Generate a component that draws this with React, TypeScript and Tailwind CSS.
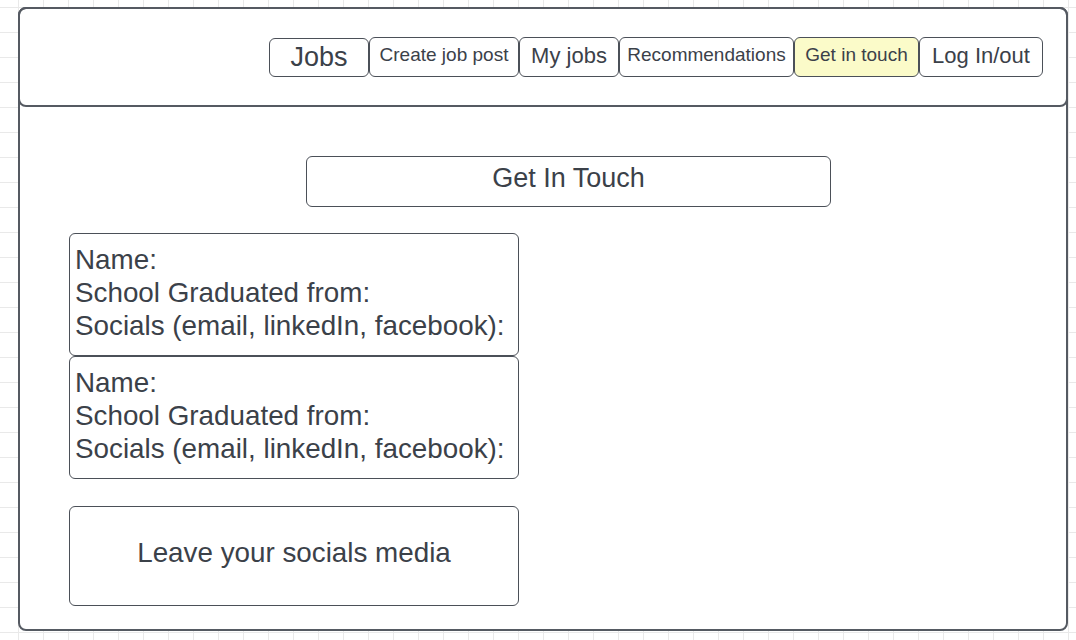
const navItems = [
  { label: "Jobs", w: "w-[100px]", text: "text-[27px]", extra: "mt-[1px] h-[39px]" },
  { label: "Create job post", w: "w-[150px]", text: "text-[19px]", extra: "h-[40px] pb-[4px]" },
  { label: "My jobs", w: "w-[100px]", text: "text-[22px]", extra: "h-[40px] pb-[3px]" },
  { label: "Recommendations", w: "w-[175px]", text: "text-[19px]", extra: "h-[40px] pb-[4px]" },
  { label: "Get in touch", w: "w-[125px]", text: "text-[19px]", extra: "h-[40px] pb-[4px] bg-[#fbfbc9]" },
  { label: "Log In/out", w: "w-[124px]", text: "text-[22px]", extra: "h-[40px] pb-[3px]" },
];

function ContactCard() {
  return (
    <div className="w-[450px] h-[123px] rounded-md border border-[#4b5058] bg-white px-[5px] pt-[9px] text-[27.8px] leading-[33px] text-[#3b4149]">
      <p>Name:</p>
      <p>School Graduated from:</p>
      <p>Socials (email, linkedIn, facebook):</p>
    </div>
  );
}

export default function App() {
  return (
    <div
      className="h-[640px] w-full overflow-hidden bg-white bg-[linear-gradient(to_right,#e9e9e9_1px,transparent_1px),linear-gradient(to_bottom,#e9e9e9_1px,transparent_1px)] bg-[size:25px_25px] bg-[position:18px_7px] pt-[7px] pl-[18px]"
      style={{ fontFamily: '"Liberation Sans", Arial, sans-serif' }}
    >
      <div className="flex h-[624px] w-[1050px] flex-col rounded-lg border-2 border-[#555a62] bg-white">
        {/* header */}
        <header className="-mx-[2px] -mt-[2px] flex h-[100px] shrink-0 items-start justify-end rounded-lg border-2 border-[#555a62] pt-[28px] pr-[23px]">
          {navItems.map((item) => (
            <button
              key={item.label}
              className={`flex items-center justify-center rounded-md border border-[#4b5058] text-[#3b4149] ${item.w} ${item.text} ${item.extra}`}
            >
              {item.label}
            </button>
          ))}
        </header>

        <div className="flex flex-col pl-[49px] pt-[49px]">
          <div className="ml-[237px] flex h-[51px] w-[525px] items-center justify-center rounded-md border border-[#4b5058] pb-[6px] text-[27px] text-[#3b4149]">
            Get In Touch
          </div>

          <div className="mt-[26px] flex flex-col">
            <ContactCard />
            <ContactCard />
          </div>

          <div className="mt-[27px] flex h-[100px] w-[450px] items-center justify-center rounded-md border border-[#4b5058] pb-[7px] text-[27.8px] text-[#3b4149]">
            Leave your socials media
          </div>
        </div>
      </div>
    </div>
  );
}
